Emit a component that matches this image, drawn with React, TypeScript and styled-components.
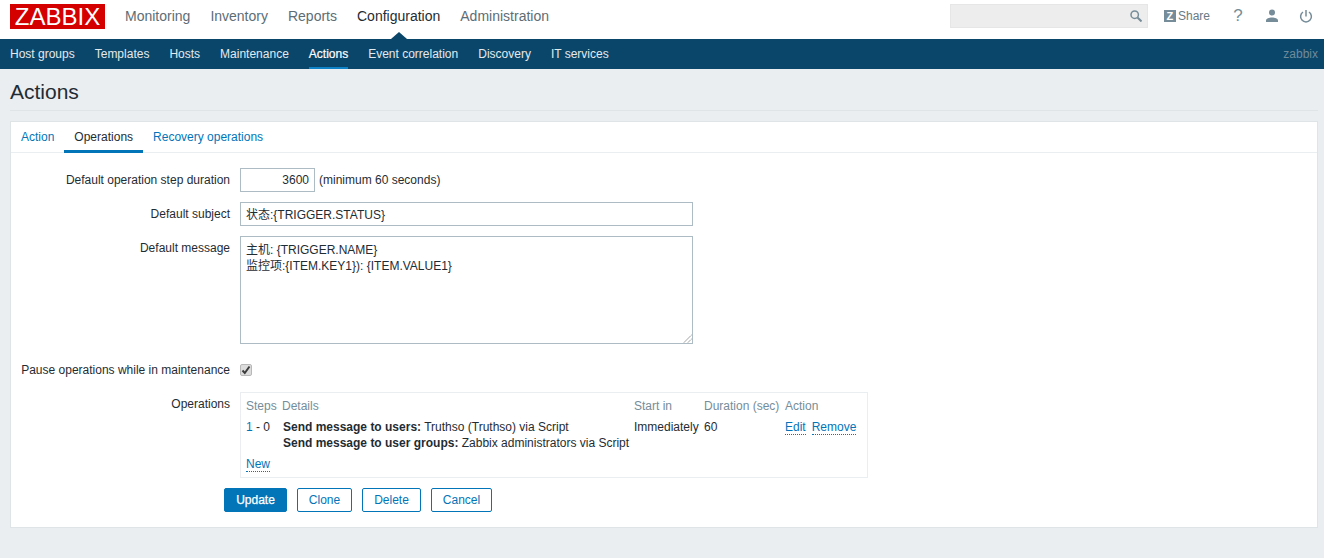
import React from "react";
import styled, { createGlobalStyle } from "styled-components";

const Global = createGlobalStyle`
  html, body { margin: 0; padding: 0; background: #ebeef0; }
  body { font-family: "Liberation Sans", Arial, "Noto Sans CJK SC", sans-serif; font-size: 12px; color: #1f2c33; }
  * { box-sizing: border-box; }
`;

const Page = styled.div`
  width: 1324px;
  height: 558px;
  overflow: hidden;
  background: #ebeef0;
`;

const TopBar = styled.header`
  height: 39px;
  background: #fff;
  display: flex;
  align-items: center;
  padding: 0 10px;
`;

const Logo = styled.div`
  width: 95px;
  height: 25px;
  margin-top: -6px;
  background: #d40000;
  color: #fff;
  font-size: 24px;
  line-height: 25px;
  text-align: center;
`;

const MainNav = styled.nav`
  display: flex;
  gap: 20px;
  margin-left: 20px;
  margin-top: -7px;
`;

const MainItem = styled.span<{ $active?: boolean }>`
  position: relative;
  font-size: 14px;
  line-height: 20px;
  color: ${(p) => (p.$active ? "#1f2c33" : "#5d6d75")};
  ${(p) =>
    p.$active &&
    `&::after {
      content: "";
      position: absolute;
      left: 50%;
      bottom: -13px;
      margin-left: -8px;
      border-left: 8px solid transparent;
      border-right: 8px solid transparent;
      border-bottom: 7px solid #0a466a;
    }`}
`;

const TopRight = styled.div`
  margin-left: auto;
  display: flex;
  align-items: center;
  margin-top: -7px;
`;

const Search = styled.div`
  width: 198px;
  height: 24px;
  background: #ededed;
  border: 1px solid #e6e6e6;
  display: flex;
  align-items: center;
  justify-content: flex-end;
  padding-right: 5px;
`;

const ShareLink = styled.span`
  display: flex;
  align-items: center;
  gap: 2px;
  margin-left: 16px;
  margin-right: 2px;
  color: #6a7a82;
  font-size: 12px;
`;

const ZBadge = styled.span`
  width: 12px;
  height: 12px;
  display: flex;
  align-items: center;
  justify-content: center;
  background: #768d99;
  color: #fff;
  font-size: 11px;
  line-height: 12px;
  font-weight: 700;
`;

const IconSlot = styled.span`
  width: 16px;
  height: 16px;
  display: flex;
  align-items: center;
  justify-content: center;
  margin-left: 18px;
  color: #768d99;
`;

const HelpMark = styled.span`
  font-size: 17px;
  line-height: 16px;
  color: #768d99;
`;

const SubBar = styled.nav`
  height: 30px;
  background: #0a466a;
  display: flex;
  align-items: stretch;
  gap: 20px;
  padding: 0 6px 0 10px;
`;

const SubItem = styled.span<{ $active?: boolean }>`
  display: flex;
  align-items: center;
  padding-top: 1px;
  color: ${(p) => (p.$active ? "#fff" : "#e3eaee")};
  -webkit-text-stroke: ${(p) => (p.$active ? "0.2px #fff" : "0")};
  border-bottom: 2px solid ${(p) => (p.$active ? "#0f83c7" : "transparent")};
  line-height: 14px;
`;

const UserName = styled.span`
  margin-left: auto;
  display: flex;
  align-items: center;
  color: #6f8b9b;
  padding-bottom: 1px;
`;

const Content = styled.main`
  padding: 0 6px 0 10px;
`;

const TitleRow = styled.div`
  height: 42px;
  border-bottom: 1px solid #dfe4e7;
  display: flex;
  align-items: center;
  margin-bottom: 10px;
`;

const Title = styled.h1`
  margin: 0 0 -5px;
  font-size: 21px;
  font-weight: 400;
  line-height: 24px;
  color: #1f2c33;
`;

const Panel = styled.section`
  height: 407px;
  background: #fff;
  border: 1px solid #dfe4e7;
`;

const Tabs = styled.div`
  height: 31px;
  display: flex;
  border-bottom: 1px solid #ebeef0;
`;

const Tab = styled.span<{ $active?: boolean }>`
  padding: 2px 10px 0;
  height: 31px;
  display: flex;
  align-items: center;
  color: ${(p) => (p.$active ? "#1f2c33" : "#0275b8")};
  border-bottom: 3px solid ${(p) => (p.$active ? "#0275b8" : "transparent")};
`;

const Form = styled.div`
  padding-top: 15px;
  display: flex;
  flex-direction: column;
`;

const Row = styled.div<{ $mb: number }>`
  display: grid;
  grid-template-columns: 219px 1fr;
  column-gap: 10px;
  margin-bottom: ${(p) => p.$mb}px;
`;

const Label = styled.label<{ $top?: number }>`
  text-align: right;
  line-height: 14px;
  padding-top: ${(p) => p.$top ?? 5}px;
  color: #1f2c33;
`;

const Field = styled.div`
  display: flex;
  align-items: center;
`;

const NumberBox = styled.div`
  width: 75px;
  height: 24px;
  border: 1px solid #acbbc4;
  text-align: right;
  padding: 0 5px;
  line-height: 22px;
  color: #1f2c33;
`;

const Hint = styled.span`
  margin-left: 4px;
`;

const TextBox = styled.div`
  width: 453px;
  height: 24px;
  border: 1px solid #acbbc4;
  padding: 1px 5px 0;
  line-height: 22px;
`;

const MessageBox = styled.div`
  position: relative;
  width: 453px;
  height: 108px;
  border: 1px solid #acbbc4;
  padding: 5px;
  line-height: 16px;
`;

const Grip = styled.svg`
  position: absolute;
  right: 0;
  bottom: 0;
`;

const Check = styled.span`
  width: 12px;
  height: 12px;
  margin-top: 1px;
  background: #dcdcdc;
  border: 1px solid #b8b8b8;
  border-radius: 2px;
  display: flex;
  align-items: center;
  justify-content: center;
`;

const OpsBox = styled.div`
  width: 628px;
  height: 86px;
  border: 1px solid #ebeef0;
  padding: 6px 5px 5px;
`;

const OpsGrid = styled.div`
  display: grid;
  grid-template-columns: 36px 352px 70px 81px 1fr;
`;

const HeadCell = styled.span`
  color: #768d99;
  line-height: 14px;
  padding-bottom: 6px;
`;

const Cell = styled.div`
  line-height: 16px;
  white-space: nowrap;
`;

const DetailCell = styled(Cell)`
  padding-left: 1px;
`;

const LinkText = styled.span`
  color: #0275b8;
`;

const DotLink = styled.span`
  color: #0275b8;
  border-bottom: 1px dotted #0275b8;
  line-height: 14px;
  display: inline-block;
`;

const ActionLinks = styled(Cell)`
  display: flex;
  gap: 6px;
  align-items: flex-start;
`;

const NewRow = styled.div`
  margin-top: 6px;
  line-height: 14px;
`;

const Buttons = styled.div`
  display: flex;
  gap: 10px;
  padding-left: 213px;
  margin-top: 10px;
`;

const Button = styled.span<{ $primary?: boolean; $w: number }>`
  width: ${(p) => p.$w}px;
  height: 24px;
  border: 1px solid #0275b8;
  border-radius: 2px;
  display: flex;
  align-items: center;
  justify-content: center;
  background: ${(p) => (p.$primary ? "#0275b8" : "#fff")};
  color: ${(p) => (p.$primary ? "#fff" : "#0275b8")};
  -webkit-text-stroke: ${(p) => (p.$primary ? "0.25px #fff" : "0")};
`;

const Bold = styled.b`
  font-weight: 700;
`;

export default function App() {
  return (
    <Page>
      <Global />
      <TopBar>
        <Logo>ZABBIX</Logo>
        <MainNav>
          <MainItem>Monitoring</MainItem>
          <MainItem>Inventory</MainItem>
          <MainItem>Reports</MainItem>
          <MainItem $active>Configuration</MainItem>
          <MainItem>Administration</MainItem>
        </MainNav>
        <TopRight>
          <Search>
            <svg width="12" height="12" viewBox="0 0 12 12" fill="none" stroke="#768d99">
              <circle cx="4.7" cy="4.7" r="3.7" strokeWidth="1.5" />
              <path d="M7.5 7.5 11.5 11.5" strokeWidth="2" />
            </svg>
          </Search>
          <ShareLink>
            <ZBadge>Z</ZBadge>
            Share
          </ShareLink>
          <IconSlot>
            <HelpMark>?</HelpMark>
          </IconSlot>
          <IconSlot>
            <svg width="14" height="14" viewBox="0 0 14 14" fill="#768d99">
              <circle cx="7" cy="3.6" r="3" />
              <path d="M1 13v-1.4C1 9.8 4 8.6 7 8.6s6 1.2 6 3V13z" />
            </svg>
          </IconSlot>
          <IconSlot>
            <svg width="14" height="14" viewBox="0 0 14 14" fill="none" stroke="#768d99" strokeWidth="1.5">
              <path d="M4 3a5.4 5.4 0 1 0 6 0" />
              <path d="M7 1v6.5" />
            </svg>
          </IconSlot>
        </TopRight>
      </TopBar>
      <SubBar>
        <SubItem>Host groups</SubItem>
        <SubItem>Templates</SubItem>
        <SubItem>Hosts</SubItem>
        <SubItem>Maintenance</SubItem>
        <SubItem $active>Actions</SubItem>
        <SubItem>Event correlation</SubItem>
        <SubItem>Discovery</SubItem>
        <SubItem>IT services</SubItem>
        <UserName>zabbix</UserName>
      </SubBar>
      <Content>
        <TitleRow>
          <Title>Actions</Title>
        </TitleRow>
        <Panel>
          <Tabs>
            <Tab>Action</Tab>
            <Tab $active>Operations</Tab>
            <Tab>Recovery operations</Tab>
          </Tabs>
          <Form>
            <Row $mb={10}>
              <Label>Default operation step duration</Label>
              <Field>
                <NumberBox>3600</NumberBox>
                <Hint>(minimum 60 seconds)</Hint>
              </Field>
            </Row>
            <Row $mb={10}>
              <Label>Default subject</Label>
              <Field>
                <TextBox>状态:{"{TRIGGER.STATUS}"}</TextBox>
              </Field>
            </Row>
            <Row $mb={18}>
              <Label>Default message</Label>
              <Field>
                <MessageBox>
                  主机: {"{TRIGGER.NAME}"}
                  <br />
                  监控项:{"{ITEM.KEY1}"}): {"{ITEM.VALUE1}"}
                  <Grip width="9" height="9" viewBox="0 0 9 9" stroke="#555" strokeWidth="0.8" strokeDasharray="1 0.4">
                    <path d="M1 8.5 8.5 1M5 8.5 8.5 5" />
                  </Grip>
                </MessageBox>
              </Field>
            </Row>
            <Row $mb={15}>
              <Label $top={1}>Pause operations while in maintenance</Label>
              <Field>
                <Check>
                  <svg width="10" height="10" viewBox="0 0 10 10" fill="none" stroke="#3c3c3c" strokeWidth="2">
                    <path d="M1.5 5.5 3.8 8 8.5 1.5" />
                  </svg>
                </Check>
              </Field>
            </Row>
            <Row $mb={0}>
              <Label>Operations</Label>
              <OpsBox>
                <OpsGrid>
                  <HeadCell>Steps</HeadCell>
                  <HeadCell>Details</HeadCell>
                  <HeadCell>Start in</HeadCell>
                  <HeadCell>Duration (sec)</HeadCell>
                  <HeadCell>Action</HeadCell>
                  <Cell>
                    <LinkText>1</LinkText> - 0
                  </Cell>
                  <DetailCell>
                    <Bold>Send message to users:</Bold> Truthso (Truthso) via Script
                    <br />
                    <Bold>Send message to user groups:</Bold> Zabbix administrators via Script
                  </DetailCell>
                  <Cell>Immediately</Cell>
                  <Cell>60</Cell>
                  <ActionLinks>
                    <div>
                      <DotLink>Edit</DotLink>
                    </div>
                    <div>
                      <DotLink>Remove</DotLink>
                    </div>
                  </ActionLinks>
                </OpsGrid>
                <NewRow>
                  <DotLink>New</DotLink>
                </NewRow>
              </OpsBox>
            </Row>
            <Buttons>
              <Button $primary $w={63}>Update</Button>
              <Button $w={55}>Clone</Button>
              <Button $w={59}>Delete</Button>
              <Button $w={61}>Cancel</Button>
            </Buttons>
          </Form>
        </Panel>
      </Content>
    </Page>
  );
}
